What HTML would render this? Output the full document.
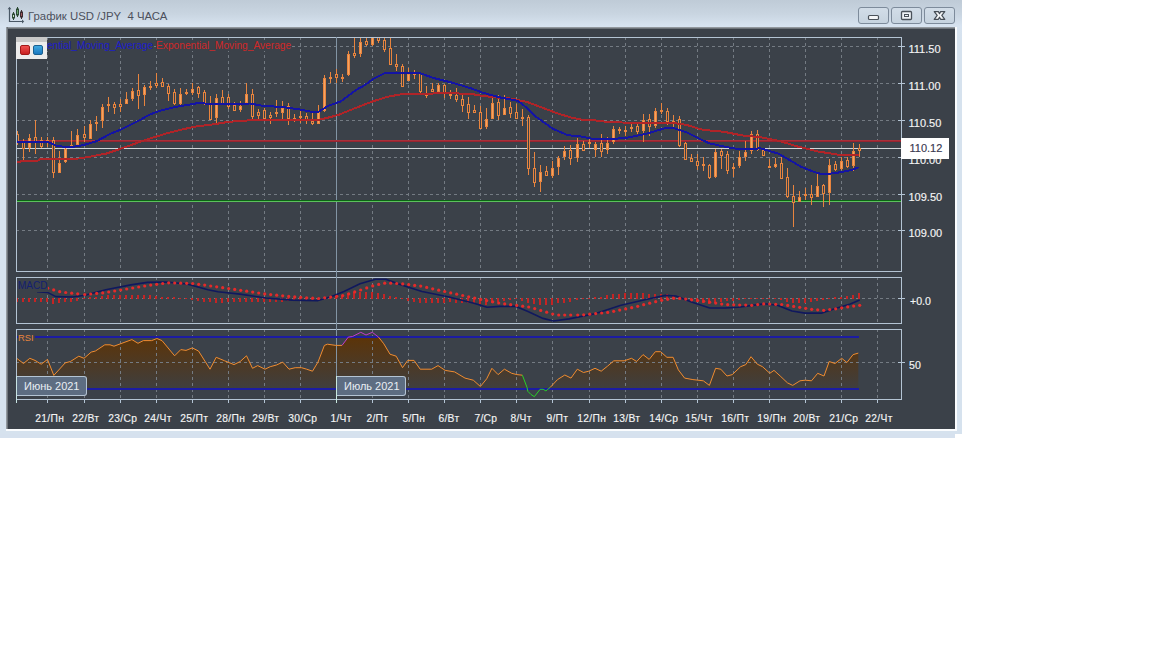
<!DOCTYPE html>
<html><head><meta charset="utf-8">
<style>
html,body{margin:0;padding:0;}
body{width:1152px;height:648px;overflow:hidden;background:#fff;position:relative;font-family:"Liberation Sans",sans-serif;}
.abs{position:absolute;}
#win{left:0;top:0;width:962px;height:434px;background:linear-gradient(#bfcbd7 0px,#c9d5e1 14px,#d7e3f0 26px,#d6e2ee 40px,#d6e2ee 434px);}
#strip{left:0;top:434px;width:955px;height:4px;background:#d6e1ee;}
#dark{left:8px;top:29px;width:947px;height:400px;background:#3b4149;}
#shadowT{left:6px;top:27px;width:949px;height:2px;background:linear-gradient(#a4aab0,#5c6268);}
#shadowL{left:6px;top:27px;width:2px;height:402px;background:linear-gradient(90deg,#a4aab0,#5c6268);}
#whiteR{left:955px;top:27px;width:2px;height:404px;background:#fafcfe;}
#whiteB{left:6px;top:429px;width:951px;height:2px;background:#fafcfe;}
.title{left:28px;top:9px;font-size:11.6px;color:#4c505c;white-space:nowrap;transform:scaleX(0.98);transform-origin:0 0;}
.btn{top:7px;width:29px;height:15px;border:1px solid #7d8b9b;border-radius:3px;background:linear-gradient(#d2dde8,#c6d3df);}
svg{position:absolute;left:0;top:0;}
.lbl{font-size:11px;color:#f4f4f4;white-space:nowrap;-webkit-text-stroke:0.15px currentColor;}
.date{font-size:10.3px;letter-spacing:0.3px;color:#f4f4f4;white-space:nowrap;top:413px;-webkit-text-stroke:0.15px currentColor;}
.month{height:18px;background:#5d6d82;border:1px solid #b4c4d4;border-left:none;border-radius:0 3px 3px 0;color:#e8eef4;font-size:11px;white-space:nowrap;}
.leg{font-size:10.2px;white-space:nowrap;top:40px;background:#3b4149;}
</style></head><body>
<div id="win" class="abs"></div>
<div id="strip" class="abs"></div>
<div id="shadowT" class="abs"></div>
<div id="shadowL" class="abs"></div>
<div id="dark" class="abs"></div>
<div id="whiteR" class="abs"></div>
<div id="whiteB" class="abs"></div>
<svg width="30" height="30" style="left:0;top:0">
<path d="M9.5 8 V21.5 H23" fill="none" stroke="#4a5866" stroke-width="1.2"/>
<path d="M7.6 9.2 L9.5 6.8 L11.4 9.2 Z" fill="#4a5866"/>
<path d="M22 19.6 L24.2 21.5 L22 23.4 Z" fill="#4a5866"/>
<line x1="13.5" y1="12" x2="13.5" y2="20" stroke="#2c4a34"/>
<rect x="12.5" y="14" width="2" height="4" fill="#c8e0c8" stroke="#2c4a34" stroke-width="1"/>
<line x1="17.5" y1="7" x2="17.5" y2="17" stroke="#2c4a34"/>
<rect x="16.5" y="9" width="2" height="6" fill="#68a870" stroke="#2c4a34" stroke-width="1"/>
<line x1="21.5" y1="10" x2="21.5" y2="19" stroke="#3a2c30"/>
<rect x="20.5" y="12" width="2" height="5" fill="#a05860" stroke="#3a2c30" stroke-width="1"/>
</svg>
<div class="abs title">График USD /JPY&nbsp; 4 ЧАСА</div>
<div class="abs btn" style="left:858px"></div>
<div class="abs btn" style="left:891px"></div>
<div class="abs btn" style="left:924px"></div>
<svg width="1152" height="648" style="left:0;top:0">
<rect x="868.5" y="15.5" width="10" height="4" rx="1" fill="#f4f6f8" stroke="#4a525a" stroke-width="1.2"/>
<rect x="901.5" y="11.5" width="10" height="8" rx="1" fill="#eef2f6" stroke="#4a525a" stroke-width="1.3"/>
<rect x="904.5" y="14.5" width="4" height="2" fill="none" stroke="#4a525a" stroke-width="1"/>
<path d="M934.2 11.6 L938.4 11.6 L939.5 13.7 L940.6 11.6 L944.8 11.6 L941.8 15.45 L944.8 19.3 L940.6 19.3 L939.5 17.2 L938.4 19.3 L934.2 19.3 L937.2 15.45 Z" fill="#f6f8fa" stroke="#454d56" stroke-width="1.2" stroke-linejoin="round"/>
</svg>
<svg width="1152" height="648" style="left:0;top:0" shape-rendering="crispEdges">
<defs>
<clipPath id="clipMain"><rect x="17" y="38" width="884" height="233"/></clipPath>
<clipPath id="clipMacd"><rect x="17" y="278" width="884" height="45"/></clipPath>
<clipPath id="clipRsi"><rect x="17" y="330" width="884" height="69"/></clipPath>
<linearGradient id="rsiGrad" x1="0" y1="337" x2="0" y2="392" gradientUnits="userSpaceOnUse">
<stop offset="0" stop-color="#5c3408"/><stop offset="1" stop-color="#3d3f42"/>
</linearGradient>
</defs>
<rect x="16" y="37" width="885" height="234" fill="none" stroke="#b4c4d4" stroke-width="1" transform="translate(0.5 0.5)"/>
<rect x="16" y="277" width="885" height="46" fill="none" stroke="#b4c4d4" stroke-width="1" transform="translate(0.5 0.5)"/>
<rect x="16" y="329" width="885" height="70" fill="none" stroke="#b4c4d4" stroke-width="1" transform="translate(0.5 0.5)"/>
<g clip-path="url(#clipRsi)">
<polygon points="16.7,389.0 16.7,358.3 23.5,363.5 29.8,358.3 35.0,360.4 41.2,364.2 47.5,359.4 53.8,375.4 65.2,362.9 70.4,361.5 78.8,356.2 84.0,358.3 91.2,352.1 95.4,351.0 104.8,344.8 110.0,344.8 114.0,346.2 120.4,343.8 131.9,339.6 138.0,343.3 143.3,340.6 151.7,340.6 156.9,338.5 162.0,340.6 174.6,355.8 180.8,349.6 186.0,350.4 192.3,347.9 198.5,351.0 210.0,369.2 216.2,357.3 224.6,360.8 234.0,364.6 240.2,361.5 246.5,355.8 252.5,368.3 257.7,365.6 265.0,369.2 270.2,366.7 276.5,365.0 282.7,362.1 289.0,369.2 295.2,367.7 301.5,367.7 306.7,369.2 312.5,371.2 318.0,362.1 324.4,345.4 327.5,344.2 335.8,345.4 342.0,345.4 348.3,337.1 352.5,337.0 360.8,337.0 366.0,337.0 372.3,337.0 378.5,337.1 383.8,343.8 390.0,354.2 396.2,356.2 402.5,367.7 407.7,360.4 414.0,360.4 420.2,369.2 431.7,369.2 438.0,365.6 445.2,370.4 454.6,371.9 465.0,378.1 473.3,380.2 480.4,386.5 486.7,378.8 491.9,368.3 498.1,374.6 504.4,369.2 511.7,373.3 516.9,374.6 522.4,375.2 527.0,387.4 527.8,389.0 530.9,389.0 534.3,389.0 540.1,389.0 543.2,389.0 545.9,389.0 547.8,389.0 550.2,387.4 557.5,379.6 564.8,375.0 571.0,378.1 577.3,369.2 583.5,372.5 588.8,371.2 595.0,368.3 601.2,371.2 607.5,366.2 613.8,360.8 624.2,360.8 631.5,358.3 636.7,361.5 643.0,354.6 649.2,359.4 655.4,351.7 660.6,351.7 666.9,357.3 673.1,357.3 678.3,369.8 684.6,378.1 692.9,379.6 703.3,380.8 709.4,385.4 715.6,368.3 720.8,369.2 727.0,376.0 732.3,374.6 740.6,366.7 745.8,364.6 751.0,356.7 757.3,364.2 762.5,366.7 769.8,373.3 774.0,370.4 780.2,376.0 787.5,382.9 792.7,385.4 800.0,380.8 805.2,380.2 811.5,380.8 817.7,373.3 824.0,376.0 829.2,361.5 835.0,363.5 841.7,358.3 846.9,362.5 853.1,354.6 858.3,353.1 858.3,389.0" fill="url(#rsiGrad)" shape-rendering="geometricPrecision"/>
</g>
<line x1="47.5" y1="38" x2="47.5" y2="271" stroke="#747b83" stroke-width="1" stroke-dasharray="3 3" stroke-dashoffset="1"/>
<line x1="47.5" y1="278" x2="47.5" y2="323" stroke="#747b83" stroke-width="1" stroke-dasharray="3 3" stroke-dashoffset="1"/>
<line x1="47.5" y1="330" x2="47.5" y2="399" stroke="#747b83" stroke-width="1" stroke-dasharray="3 3" stroke-dashoffset="1"/>
<rect x="47" y="399" width="1" height="4" fill="#b4c4d4"/>
<line x1="84.5" y1="38" x2="84.5" y2="271" stroke="#747b83" stroke-width="1" stroke-dasharray="3 3" stroke-dashoffset="1"/>
<line x1="84.5" y1="278" x2="84.5" y2="323" stroke="#747b83" stroke-width="1" stroke-dasharray="3 3" stroke-dashoffset="1"/>
<line x1="84.5" y1="330" x2="84.5" y2="399" stroke="#747b83" stroke-width="1" stroke-dasharray="3 3" stroke-dashoffset="1"/>
<rect x="84" y="399" width="1" height="4" fill="#b4c4d4"/>
<line x1="120.5" y1="38" x2="120.5" y2="271" stroke="#747b83" stroke-width="1" stroke-dasharray="3 3" stroke-dashoffset="1"/>
<line x1="120.5" y1="278" x2="120.5" y2="323" stroke="#747b83" stroke-width="1" stroke-dasharray="3 3" stroke-dashoffset="1"/>
<line x1="120.5" y1="330" x2="120.5" y2="399" stroke="#747b83" stroke-width="1" stroke-dasharray="3 3" stroke-dashoffset="1"/>
<rect x="120" y="399" width="1" height="4" fill="#b4c4d4"/>
<line x1="156.5" y1="38" x2="156.5" y2="271" stroke="#747b83" stroke-width="1" stroke-dasharray="3 3" stroke-dashoffset="1"/>
<line x1="156.5" y1="278" x2="156.5" y2="323" stroke="#747b83" stroke-width="1" stroke-dasharray="3 3" stroke-dashoffset="1"/>
<line x1="156.5" y1="330" x2="156.5" y2="399" stroke="#747b83" stroke-width="1" stroke-dasharray="3 3" stroke-dashoffset="1"/>
<rect x="156" y="399" width="1" height="4" fill="#b4c4d4"/>
<line x1="192.5" y1="38" x2="192.5" y2="271" stroke="#747b83" stroke-width="1" stroke-dasharray="3 3" stroke-dashoffset="1"/>
<line x1="192.5" y1="278" x2="192.5" y2="323" stroke="#747b83" stroke-width="1" stroke-dasharray="3 3" stroke-dashoffset="1"/>
<line x1="192.5" y1="330" x2="192.5" y2="399" stroke="#747b83" stroke-width="1" stroke-dasharray="3 3" stroke-dashoffset="1"/>
<rect x="192" y="399" width="1" height="4" fill="#b4c4d4"/>
<line x1="228.5" y1="38" x2="228.5" y2="271" stroke="#747b83" stroke-width="1" stroke-dasharray="3 3" stroke-dashoffset="1"/>
<line x1="228.5" y1="278" x2="228.5" y2="323" stroke="#747b83" stroke-width="1" stroke-dasharray="3 3" stroke-dashoffset="1"/>
<line x1="228.5" y1="330" x2="228.5" y2="399" stroke="#747b83" stroke-width="1" stroke-dasharray="3 3" stroke-dashoffset="1"/>
<rect x="228" y="399" width="1" height="4" fill="#b4c4d4"/>
<line x1="264.5" y1="38" x2="264.5" y2="271" stroke="#747b83" stroke-width="1" stroke-dasharray="3 3" stroke-dashoffset="1"/>
<line x1="264.5" y1="278" x2="264.5" y2="323" stroke="#747b83" stroke-width="1" stroke-dasharray="3 3" stroke-dashoffset="1"/>
<line x1="264.5" y1="330" x2="264.5" y2="399" stroke="#747b83" stroke-width="1" stroke-dasharray="3 3" stroke-dashoffset="1"/>
<rect x="264" y="399" width="1" height="4" fill="#b4c4d4"/>
<line x1="300.5" y1="38" x2="300.5" y2="271" stroke="#747b83" stroke-width="1" stroke-dasharray="3 3" stroke-dashoffset="1"/>
<line x1="300.5" y1="278" x2="300.5" y2="323" stroke="#747b83" stroke-width="1" stroke-dasharray="3 3" stroke-dashoffset="1"/>
<line x1="300.5" y1="330" x2="300.5" y2="399" stroke="#747b83" stroke-width="1" stroke-dasharray="3 3" stroke-dashoffset="1"/>
<rect x="300" y="399" width="1" height="4" fill="#b4c4d4"/>
<line x1="372.5" y1="38" x2="372.5" y2="271" stroke="#747b83" stroke-width="1" stroke-dasharray="3 3" stroke-dashoffset="1"/>
<line x1="372.5" y1="278" x2="372.5" y2="323" stroke="#747b83" stroke-width="1" stroke-dasharray="3 3" stroke-dashoffset="1"/>
<line x1="372.5" y1="330" x2="372.5" y2="399" stroke="#747b83" stroke-width="1" stroke-dasharray="3 3" stroke-dashoffset="1"/>
<rect x="372" y="399" width="1" height="4" fill="#b4c4d4"/>
<line x1="408.5" y1="38" x2="408.5" y2="271" stroke="#747b83" stroke-width="1" stroke-dasharray="3 3" stroke-dashoffset="1"/>
<line x1="408.5" y1="278" x2="408.5" y2="323" stroke="#747b83" stroke-width="1" stroke-dasharray="3 3" stroke-dashoffset="1"/>
<line x1="408.5" y1="330" x2="408.5" y2="399" stroke="#747b83" stroke-width="1" stroke-dasharray="3 3" stroke-dashoffset="1"/>
<rect x="408" y="399" width="1" height="4" fill="#b4c4d4"/>
<line x1="444.5" y1="38" x2="444.5" y2="271" stroke="#747b83" stroke-width="1" stroke-dasharray="3 3" stroke-dashoffset="1"/>
<line x1="444.5" y1="278" x2="444.5" y2="323" stroke="#747b83" stroke-width="1" stroke-dasharray="3 3" stroke-dashoffset="1"/>
<line x1="444.5" y1="330" x2="444.5" y2="399" stroke="#747b83" stroke-width="1" stroke-dasharray="3 3" stroke-dashoffset="1"/>
<rect x="444" y="399" width="1" height="4" fill="#b4c4d4"/>
<line x1="480.5" y1="38" x2="480.5" y2="271" stroke="#747b83" stroke-width="1" stroke-dasharray="3 3" stroke-dashoffset="1"/>
<line x1="480.5" y1="278" x2="480.5" y2="323" stroke="#747b83" stroke-width="1" stroke-dasharray="3 3" stroke-dashoffset="1"/>
<line x1="480.5" y1="330" x2="480.5" y2="399" stroke="#747b83" stroke-width="1" stroke-dasharray="3 3" stroke-dashoffset="1"/>
<rect x="480" y="399" width="1" height="4" fill="#b4c4d4"/>
<line x1="516.5" y1="38" x2="516.5" y2="271" stroke="#747b83" stroke-width="1" stroke-dasharray="3 3" stroke-dashoffset="1"/>
<line x1="516.5" y1="278" x2="516.5" y2="323" stroke="#747b83" stroke-width="1" stroke-dasharray="3 3" stroke-dashoffset="1"/>
<line x1="516.5" y1="330" x2="516.5" y2="399" stroke="#747b83" stroke-width="1" stroke-dasharray="3 3" stroke-dashoffset="1"/>
<rect x="516" y="399" width="1" height="4" fill="#b4c4d4"/>
<line x1="552.5" y1="38" x2="552.5" y2="271" stroke="#747b83" stroke-width="1" stroke-dasharray="3 3" stroke-dashoffset="1"/>
<line x1="552.5" y1="278" x2="552.5" y2="323" stroke="#747b83" stroke-width="1" stroke-dasharray="3 3" stroke-dashoffset="1"/>
<line x1="552.5" y1="330" x2="552.5" y2="399" stroke="#747b83" stroke-width="1" stroke-dasharray="3 3" stroke-dashoffset="1"/>
<rect x="552" y="399" width="1" height="4" fill="#b4c4d4"/>
<line x1="589.5" y1="38" x2="589.5" y2="271" stroke="#747b83" stroke-width="1" stroke-dasharray="3 3" stroke-dashoffset="1"/>
<line x1="589.5" y1="278" x2="589.5" y2="323" stroke="#747b83" stroke-width="1" stroke-dasharray="3 3" stroke-dashoffset="1"/>
<line x1="589.5" y1="330" x2="589.5" y2="399" stroke="#747b83" stroke-width="1" stroke-dasharray="3 3" stroke-dashoffset="1"/>
<rect x="589" y="399" width="1" height="4" fill="#b4c4d4"/>
<line x1="625.5" y1="38" x2="625.5" y2="271" stroke="#747b83" stroke-width="1" stroke-dasharray="3 3" stroke-dashoffset="1"/>
<line x1="625.5" y1="278" x2="625.5" y2="323" stroke="#747b83" stroke-width="1" stroke-dasharray="3 3" stroke-dashoffset="1"/>
<line x1="625.5" y1="330" x2="625.5" y2="399" stroke="#747b83" stroke-width="1" stroke-dasharray="3 3" stroke-dashoffset="1"/>
<rect x="625" y="399" width="1" height="4" fill="#b4c4d4"/>
<line x1="661.5" y1="38" x2="661.5" y2="271" stroke="#747b83" stroke-width="1" stroke-dasharray="3 3" stroke-dashoffset="1"/>
<line x1="661.5" y1="278" x2="661.5" y2="323" stroke="#747b83" stroke-width="1" stroke-dasharray="3 3" stroke-dashoffset="1"/>
<line x1="661.5" y1="330" x2="661.5" y2="399" stroke="#747b83" stroke-width="1" stroke-dasharray="3 3" stroke-dashoffset="1"/>
<rect x="661" y="399" width="1" height="4" fill="#b4c4d4"/>
<line x1="697.5" y1="38" x2="697.5" y2="271" stroke="#747b83" stroke-width="1" stroke-dasharray="3 3" stroke-dashoffset="1"/>
<line x1="697.5" y1="278" x2="697.5" y2="323" stroke="#747b83" stroke-width="1" stroke-dasharray="3 3" stroke-dashoffset="1"/>
<line x1="697.5" y1="330" x2="697.5" y2="399" stroke="#747b83" stroke-width="1" stroke-dasharray="3 3" stroke-dashoffset="1"/>
<rect x="697" y="399" width="1" height="4" fill="#b4c4d4"/>
<line x1="733.5" y1="38" x2="733.5" y2="271" stroke="#747b83" stroke-width="1" stroke-dasharray="3 3" stroke-dashoffset="1"/>
<line x1="733.5" y1="278" x2="733.5" y2="323" stroke="#747b83" stroke-width="1" stroke-dasharray="3 3" stroke-dashoffset="1"/>
<line x1="733.5" y1="330" x2="733.5" y2="399" stroke="#747b83" stroke-width="1" stroke-dasharray="3 3" stroke-dashoffset="1"/>
<rect x="733" y="399" width="1" height="4" fill="#b4c4d4"/>
<line x1="769.5" y1="38" x2="769.5" y2="271" stroke="#747b83" stroke-width="1" stroke-dasharray="3 3" stroke-dashoffset="1"/>
<line x1="769.5" y1="278" x2="769.5" y2="323" stroke="#747b83" stroke-width="1" stroke-dasharray="3 3" stroke-dashoffset="1"/>
<line x1="769.5" y1="330" x2="769.5" y2="399" stroke="#747b83" stroke-width="1" stroke-dasharray="3 3" stroke-dashoffset="1"/>
<rect x="769" y="399" width="1" height="4" fill="#b4c4d4"/>
<line x1="805.5" y1="38" x2="805.5" y2="271" stroke="#747b83" stroke-width="1" stroke-dasharray="3 3" stroke-dashoffset="1"/>
<line x1="805.5" y1="278" x2="805.5" y2="323" stroke="#747b83" stroke-width="1" stroke-dasharray="3 3" stroke-dashoffset="1"/>
<line x1="805.5" y1="330" x2="805.5" y2="399" stroke="#747b83" stroke-width="1" stroke-dasharray="3 3" stroke-dashoffset="1"/>
<rect x="805" y="399" width="1" height="4" fill="#b4c4d4"/>
<line x1="841.5" y1="38" x2="841.5" y2="271" stroke="#747b83" stroke-width="1" stroke-dasharray="3 3" stroke-dashoffset="1"/>
<line x1="841.5" y1="278" x2="841.5" y2="323" stroke="#747b83" stroke-width="1" stroke-dasharray="3 3" stroke-dashoffset="1"/>
<line x1="841.5" y1="330" x2="841.5" y2="399" stroke="#747b83" stroke-width="1" stroke-dasharray="3 3" stroke-dashoffset="1"/>
<rect x="841" y="399" width="1" height="4" fill="#b4c4d4"/>
<line x1="877.5" y1="38" x2="877.5" y2="271" stroke="#747b83" stroke-width="1" stroke-dasharray="3 3" stroke-dashoffset="1"/>
<line x1="877.5" y1="278" x2="877.5" y2="323" stroke="#747b83" stroke-width="1" stroke-dasharray="3 3" stroke-dashoffset="1"/>
<line x1="877.5" y1="330" x2="877.5" y2="399" stroke="#747b83" stroke-width="1" stroke-dasharray="3 3" stroke-dashoffset="1"/>
<rect x="877" y="399" width="1" height="4" fill="#b4c4d4"/>
<line x1="17" y1="46.5" x2="901" y2="46.5" stroke="#747b83" stroke-width="1" stroke-dasharray="3 3" stroke-dashoffset="1"/>
<rect x="898" y="46" width="7" height="1" fill="#b4c4d4"/>
<line x1="17" y1="83.5" x2="901" y2="83.5" stroke="#747b83" stroke-width="1" stroke-dasharray="3 3" stroke-dashoffset="1"/>
<rect x="898" y="83" width="7" height="1" fill="#b4c4d4"/>
<line x1="17" y1="120.5" x2="901" y2="120.5" stroke="#747b83" stroke-width="1" stroke-dasharray="3 3" stroke-dashoffset="1"/>
<rect x="898" y="120" width="7" height="1" fill="#b4c4d4"/>
<line x1="17" y1="157.5" x2="901" y2="157.5" stroke="#747b83" stroke-width="1" stroke-dasharray="3 3" stroke-dashoffset="1"/>
<rect x="898" y="157" width="7" height="1" fill="#b4c4d4"/>
<line x1="17" y1="194.5" x2="901" y2="194.5" stroke="#747b83" stroke-width="1" stroke-dasharray="3 3" stroke-dashoffset="1"/>
<rect x="898" y="194" width="7" height="1" fill="#b4c4d4"/>
<line x1="17" y1="230.5" x2="901" y2="230.5" stroke="#747b83" stroke-width="1" stroke-dasharray="3 3" stroke-dashoffset="1"/>
<rect x="898" y="230" width="7" height="1" fill="#b4c4d4"/>
<line x1="17" y1="298.5" x2="901" y2="298.5" stroke="#747b83" stroke-width="1" stroke-dasharray="3 3" stroke-dashoffset="1"/>
<rect x="898" y="298" width="7" height="1" fill="#b4c4d4"/>
<line x1="17" y1="362.5" x2="901" y2="362.5" stroke="#747b83" stroke-width="1" stroke-dasharray="3 3" stroke-dashoffset="1"/>
<rect x="898" y="362" width="7" height="1" fill="#b4c4d4"/>
<rect x="336" y="37" width="1" height="339" fill="#8294a4"/>
<g clip-path="url(#clipMain)">
<rect x="17" y="140" width="884" height="1" fill="#a8303a"/>
<rect x="17" y="141" width="884" height="1" fill="#962430"/>
<rect x="17" y="148" width="884" height="1" fill="#d2d5d9"/>
<rect x="17" y="200" width="884" height="1" fill="#0c6414"/>
<rect x="17" y="201" width="884" height="1" fill="#5cc05c"/>
<rect x="17" y="131" width="1" height="14" fill="#e8843e"/>
<rect x="16" y="134" width="3" height="9" fill="#e8843e"/>
<rect x="17" y="135" width="1" height="7" fill="#3b4149"/>
<rect x="23" y="139" width="1" height="22" fill="#e8843e"/>
<rect x="22" y="141" width="3" height="8" fill="#e8843e"/>
<rect x="23" y="142" width="1" height="6" fill="#3b4149"/>
<rect x="29" y="134" width="1" height="18" fill="#e8843e"/>
<rect x="28" y="138" width="3" height="10" fill="#e8843e"/>
<rect x="29" y="139" width="1" height="8" fill="#f4a462"/>
<rect x="35" y="120" width="1" height="34" fill="#e8843e"/>
<rect x="34" y="137" width="3" height="6" fill="#e8843e"/>
<rect x="35" y="138" width="1" height="4" fill="#3b4149"/>
<rect x="41" y="137" width="1" height="11" fill="#e8843e"/>
<rect x="40" y="140" width="3" height="7" fill="#e8843e"/>
<rect x="41" y="141" width="1" height="5" fill="#3b4149"/>
<rect x="47" y="137" width="1" height="10" fill="#e8843e"/>
<rect x="46" y="140" width="3" height="2" fill="#e8843e"/>
<rect x="53" y="137" width="1" height="41" fill="#e8843e"/>
<rect x="52" y="140" width="3" height="33" fill="#e8843e"/>
<rect x="53" y="141" width="1" height="31" fill="#3b4149"/>
<rect x="59" y="151" width="1" height="21" fill="#e8843e"/>
<rect x="58" y="163" width="3" height="10" fill="#e8843e"/>
<rect x="59" y="164" width="1" height="8" fill="#f4a462"/>
<rect x="65" y="147" width="1" height="16" fill="#e8843e"/>
<rect x="64" y="149" width="3" height="13" fill="#e8843e"/>
<rect x="65" y="150" width="1" height="11" fill="#f4a462"/>
<rect x="71" y="131" width="1" height="16" fill="#e8843e"/>
<rect x="70" y="145" width="3" height="2" fill="#e8843e"/>
<rect x="77" y="129" width="1" height="16" fill="#e8843e"/>
<rect x="76" y="135" width="3" height="10" fill="#e8843e"/>
<rect x="77" y="136" width="1" height="8" fill="#f4a462"/>
<rect x="84" y="126" width="1" height="16" fill="#e8843e"/>
<rect x="83" y="134" width="3" height="4" fill="#e8843e"/>
<rect x="84" y="135" width="1" height="2" fill="#3b4149"/>
<rect x="90" y="120" width="1" height="19" fill="#e8843e"/>
<rect x="89" y="124" width="3" height="15" fill="#e8843e"/>
<rect x="90" y="125" width="1" height="13" fill="#f4a462"/>
<rect x="96" y="116" width="1" height="15" fill="#e8843e"/>
<rect x="95" y="122" width="3" height="2" fill="#e8843e"/>
<rect x="102" y="104" width="1" height="24" fill="#e8843e"/>
<rect x="101" y="107" width="3" height="14" fill="#e8843e"/>
<rect x="102" y="108" width="1" height="12" fill="#f4a462"/>
<rect x="108" y="97" width="1" height="15" fill="#e8843e"/>
<rect x="107" y="104" width="3" height="2" fill="#e8843e"/>
<rect x="114" y="102" width="1" height="12" fill="#e8843e"/>
<rect x="113" y="104" width="3" height="4" fill="#e8843e"/>
<rect x="114" y="105" width="1" height="2" fill="#3b4149"/>
<rect x="120" y="99" width="1" height="13" fill="#e8843e"/>
<rect x="119" y="104" width="3" height="3" fill="#e8843e"/>
<rect x="120" y="105" width="1" height="1" fill="#3b4149"/>
<rect x="126" y="92" width="1" height="12" fill="#e8843e"/>
<rect x="125" y="99" width="3" height="5" fill="#e8843e"/>
<rect x="126" y="100" width="1" height="3" fill="#f4a462"/>
<rect x="132" y="88" width="1" height="13" fill="#e8843e"/>
<rect x="131" y="91" width="3" height="8" fill="#e8843e"/>
<rect x="132" y="92" width="1" height="6" fill="#f4a462"/>
<rect x="138" y="74" width="1" height="35" fill="#e8843e"/>
<rect x="137" y="90" width="3" height="6" fill="#e8843e"/>
<rect x="138" y="91" width="1" height="4" fill="#3b4149"/>
<rect x="144" y="85" width="1" height="21" fill="#e8843e"/>
<rect x="143" y="87" width="3" height="8" fill="#e8843e"/>
<rect x="144" y="88" width="1" height="6" fill="#f4a462"/>
<rect x="150" y="81" width="1" height="9" fill="#e8843e"/>
<rect x="149" y="86" width="3" height="2" fill="#e8843e"/>
<rect x="156" y="73" width="1" height="15" fill="#e8843e"/>
<rect x="155" y="83" width="3" height="3" fill="#e8843e"/>
<rect x="156" y="84" width="1" height="1" fill="#3b4149"/>
<rect x="162" y="78" width="1" height="9" fill="#e8843e"/>
<rect x="161" y="82" width="3" height="5" fill="#e8843e"/>
<rect x="162" y="83" width="1" height="3" fill="#3b4149"/>
<rect x="168" y="84" width="1" height="17" fill="#e8843e"/>
<rect x="167" y="86" width="3" height="8" fill="#e8843e"/>
<rect x="168" y="87" width="1" height="6" fill="#3b4149"/>
<rect x="174" y="89" width="1" height="16" fill="#e8843e"/>
<rect x="173" y="92" width="3" height="12" fill="#e8843e"/>
<rect x="174" y="93" width="1" height="10" fill="#3b4149"/>
<rect x="180" y="88" width="1" height="18" fill="#e8843e"/>
<rect x="179" y="94" width="3" height="10" fill="#e8843e"/>
<rect x="180" y="95" width="1" height="8" fill="#f4a462"/>
<rect x="186" y="89" width="1" height="6" fill="#e8843e"/>
<rect x="185" y="92" width="3" height="2" fill="#e8843e"/>
<rect x="192" y="83" width="1" height="12" fill="#e8843e"/>
<rect x="191" y="89" width="3" height="4" fill="#e8843e"/>
<rect x="192" y="90" width="1" height="2" fill="#f4a462"/>
<rect x="198" y="86" width="1" height="12" fill="#e8843e"/>
<rect x="197" y="87" width="3" height="7" fill="#e8843e"/>
<rect x="198" y="88" width="1" height="5" fill="#3b4149"/>
<rect x="204" y="90" width="1" height="15" fill="#e8843e"/>
<rect x="203" y="92" width="3" height="12" fill="#e8843e"/>
<rect x="204" y="93" width="1" height="10" fill="#3b4149"/>
<rect x="210" y="96" width="1" height="24" fill="#e8843e"/>
<rect x="209" y="104" width="3" height="16" fill="#e8843e"/>
<rect x="210" y="105" width="1" height="14" fill="#3b4149"/>
<rect x="216" y="94" width="1" height="29" fill="#e8843e"/>
<rect x="215" y="98" width="3" height="20" fill="#e8843e"/>
<rect x="216" y="99" width="1" height="18" fill="#f4a462"/>
<rect x="222" y="90" width="1" height="14" fill="#e8843e"/>
<rect x="221" y="97" width="3" height="7" fill="#e8843e"/>
<rect x="222" y="98" width="1" height="5" fill="#3b4149"/>
<rect x="228" y="94" width="1" height="15" fill="#e8843e"/>
<rect x="227" y="97" width="3" height="10" fill="#e8843e"/>
<rect x="228" y="98" width="1" height="8" fill="#3b4149"/>
<rect x="234" y="102" width="1" height="9" fill="#e8843e"/>
<rect x="233" y="105" width="3" height="6" fill="#e8843e"/>
<rect x="234" y="106" width="1" height="4" fill="#3b4149"/>
<rect x="240" y="101" width="1" height="11" fill="#e8843e"/>
<rect x="239" y="106" width="3" height="4" fill="#e8843e"/>
<rect x="240" y="107" width="1" height="2" fill="#f4a462"/>
<rect x="246" y="83" width="1" height="22" fill="#e8843e"/>
<rect x="245" y="94" width="3" height="9" fill="#e8843e"/>
<rect x="246" y="95" width="1" height="7" fill="#f4a462"/>
<rect x="252" y="89" width="1" height="31" fill="#e8843e"/>
<rect x="251" y="94" width="3" height="23" fill="#e8843e"/>
<rect x="252" y="95" width="1" height="21" fill="#3b4149"/>
<rect x="258" y="109" width="1" height="10" fill="#e8843e"/>
<rect x="257" y="112" width="3" height="4" fill="#e8843e"/>
<rect x="258" y="113" width="1" height="2" fill="#3b4149"/>
<rect x="264" y="108" width="1" height="12" fill="#e8843e"/>
<rect x="263" y="110" width="3" height="9" fill="#e8843e"/>
<rect x="264" y="111" width="1" height="7" fill="#3b4149"/>
<rect x="270" y="112" width="1" height="12" fill="#e8843e"/>
<rect x="269" y="115" width="3" height="3" fill="#e8843e"/>
<rect x="270" y="116" width="1" height="1" fill="#3b4149"/>
<rect x="276" y="100" width="1" height="17" fill="#e8843e"/>
<rect x="275" y="112" width="3" height="2" fill="#e8843e"/>
<rect x="282" y="101" width="1" height="18" fill="#e8843e"/>
<rect x="281" y="108" width="3" height="5" fill="#e8843e"/>
<rect x="282" y="109" width="1" height="3" fill="#f4a462"/>
<rect x="288" y="103" width="1" height="22" fill="#e8843e"/>
<rect x="287" y="106" width="3" height="13" fill="#e8843e"/>
<rect x="288" y="107" width="1" height="11" fill="#3b4149"/>
<rect x="294" y="114" width="1" height="8" fill="#e8843e"/>
<rect x="293" y="118" width="3" height="2" fill="#e8843e"/>
<rect x="300" y="110" width="1" height="13" fill="#e8843e"/>
<rect x="299" y="116" width="3" height="2" fill="#e8843e"/>
<rect x="306" y="113" width="1" height="11" fill="#e8843e"/>
<rect x="305" y="116" width="3" height="4" fill="#e8843e"/>
<rect x="306" y="117" width="1" height="2" fill="#3b4149"/>
<rect x="312" y="113" width="1" height="12" fill="#e8843e"/>
<rect x="311" y="121" width="3" height="3" fill="#e8843e"/>
<rect x="312" y="122" width="1" height="1" fill="#3b4149"/>
<rect x="318" y="105" width="1" height="19" fill="#e8843e"/>
<rect x="317" y="112" width="3" height="12" fill="#e8843e"/>
<rect x="318" y="113" width="1" height="10" fill="#f4a462"/>
<rect x="324" y="75" width="1" height="37" fill="#e8843e"/>
<rect x="323" y="78" width="3" height="33" fill="#e8843e"/>
<rect x="324" y="79" width="1" height="31" fill="#f4a462"/>
<rect x="330" y="72" width="1" height="11" fill="#e8843e"/>
<rect x="329" y="77" width="3" height="2" fill="#e8843e"/>
<rect x="336" y="69" width="1" height="14" fill="#e8843e"/>
<rect x="335" y="74" width="3" height="4" fill="#e8843e"/>
<rect x="336" y="75" width="1" height="2" fill="#3b4149"/>
<rect x="342" y="74" width="1" height="8" fill="#e8843e"/>
<rect x="341" y="77" width="3" height="2" fill="#e8843e"/>
<rect x="348" y="51" width="1" height="25" fill="#e8843e"/>
<rect x="347" y="54" width="3" height="21" fill="#e8843e"/>
<rect x="348" y="55" width="1" height="19" fill="#f4a462"/>
<rect x="354" y="37" width="1" height="21" fill="#e8843e"/>
<rect x="353" y="53" width="3" height="3" fill="#e8843e"/>
<rect x="354" y="54" width="1" height="1" fill="#3b4149"/>
<rect x="360" y="37" width="1" height="20" fill="#e8843e"/>
<rect x="359" y="42" width="3" height="12" fill="#e8843e"/>
<rect x="360" y="43" width="1" height="10" fill="#f4a462"/>
<rect x="366" y="37" width="1" height="9" fill="#e8843e"/>
<rect x="365" y="41" width="3" height="4" fill="#e8843e"/>
<rect x="366" y="42" width="1" height="2" fill="#3b4149"/>
<rect x="372" y="37" width="1" height="9" fill="#e8843e"/>
<rect x="371" y="37" width="3" height="8" fill="#e8843e"/>
<rect x="372" y="38" width="1" height="6" fill="#f4a462"/>
<rect x="378" y="37" width="1" height="6" fill="#e8843e"/>
<rect x="377" y="37" width="3" height="4" fill="#e8843e"/>
<rect x="378" y="38" width="1" height="2" fill="#3b4149"/>
<rect x="384" y="38" width="1" height="14" fill="#e8843e"/>
<rect x="383" y="40" width="3" height="10" fill="#e8843e"/>
<rect x="384" y="41" width="1" height="8" fill="#3b4149"/>
<rect x="390" y="37" width="1" height="28" fill="#e8843e"/>
<rect x="389" y="48" width="3" height="17" fill="#e8843e"/>
<rect x="390" y="49" width="1" height="15" fill="#3b4149"/>
<rect x="396" y="54" width="1" height="17" fill="#e8843e"/>
<rect x="395" y="64" width="3" height="3" fill="#e8843e"/>
<rect x="396" y="65" width="1" height="1" fill="#3b4149"/>
<rect x="402" y="64" width="1" height="22" fill="#e8843e"/>
<rect x="401" y="66" width="3" height="21" fill="#e8843e"/>
<rect x="402" y="67" width="1" height="19" fill="#3b4149"/>
<rect x="408" y="68" width="1" height="13" fill="#e8843e"/>
<rect x="407" y="74" width="3" height="7" fill="#e8843e"/>
<rect x="408" y="75" width="1" height="5" fill="#f4a462"/>
<rect x="414" y="70" width="1" height="9" fill="#e8843e"/>
<rect x="413" y="72" width="3" height="3" fill="#e8843e"/>
<rect x="414" y="73" width="1" height="1" fill="#3b4149"/>
<rect x="420" y="72" width="1" height="21" fill="#e8843e"/>
<rect x="419" y="73" width="3" height="19" fill="#e8843e"/>
<rect x="420" y="74" width="1" height="17" fill="#3b4149"/>
<rect x="426" y="86" width="1" height="12" fill="#e8843e"/>
<rect x="425" y="94" width="3" height="2" fill="#e8843e"/>
<rect x="432" y="83" width="1" height="9" fill="#e8843e"/>
<rect x="431" y="89" width="3" height="3" fill="#e8843e"/>
<rect x="432" y="90" width="1" height="1" fill="#3b4149"/>
<rect x="438" y="83" width="1" height="9" fill="#e8843e"/>
<rect x="437" y="85" width="3" height="7" fill="#e8843e"/>
<rect x="438" y="86" width="1" height="5" fill="#f4a462"/>
<rect x="444" y="84" width="1" height="14" fill="#e8843e"/>
<rect x="443" y="85" width="3" height="9" fill="#e8843e"/>
<rect x="444" y="86" width="1" height="7" fill="#3b4149"/>
<rect x="450" y="90" width="1" height="9" fill="#e8843e"/>
<rect x="449" y="94" width="3" height="2" fill="#e8843e"/>
<rect x="456" y="88" width="1" height="14" fill="#e8843e"/>
<rect x="455" y="95" width="3" height="5" fill="#e8843e"/>
<rect x="456" y="96" width="1" height="3" fill="#3b4149"/>
<rect x="462" y="94" width="1" height="18" fill="#e8843e"/>
<rect x="461" y="99" width="3" height="7" fill="#e8843e"/>
<rect x="462" y="100" width="1" height="5" fill="#3b4149"/>
<rect x="468" y="97" width="1" height="22" fill="#e8843e"/>
<rect x="467" y="104" width="3" height="9" fill="#e8843e"/>
<rect x="468" y="105" width="1" height="7" fill="#3b4149"/>
<rect x="474" y="105" width="1" height="8" fill="#e8843e"/>
<rect x="473" y="110" width="3" height="3" fill="#e8843e"/>
<rect x="474" y="111" width="1" height="1" fill="#3b4149"/>
<rect x="480" y="106" width="1" height="23" fill="#e8843e"/>
<rect x="479" y="112" width="3" height="17" fill="#e8843e"/>
<rect x="480" y="113" width="1" height="15" fill="#3b4149"/>
<rect x="486" y="108" width="1" height="21" fill="#e8843e"/>
<rect x="485" y="119" width="3" height="8" fill="#e8843e"/>
<rect x="486" y="120" width="1" height="6" fill="#f4a462"/>
<rect x="492" y="98" width="1" height="21" fill="#e8843e"/>
<rect x="491" y="103" width="3" height="16" fill="#e8843e"/>
<rect x="492" y="104" width="1" height="14" fill="#f4a462"/>
<rect x="498" y="95" width="1" height="25" fill="#e8843e"/>
<rect x="497" y="102" width="3" height="14" fill="#e8843e"/>
<rect x="498" y="103" width="1" height="12" fill="#3b4149"/>
<rect x="504" y="95" width="1" height="20" fill="#e8843e"/>
<rect x="503" y="108" width="3" height="7" fill="#e8843e"/>
<rect x="504" y="109" width="1" height="5" fill="#f4a462"/>
<rect x="510" y="102" width="1" height="16" fill="#e8843e"/>
<rect x="509" y="107" width="3" height="7" fill="#e8843e"/>
<rect x="510" y="108" width="1" height="5" fill="#3b4149"/>
<rect x="516" y="104" width="1" height="15" fill="#e8843e"/>
<rect x="515" y="112" width="3" height="7" fill="#e8843e"/>
<rect x="516" y="113" width="1" height="5" fill="#3b4149"/>
<rect x="522" y="109" width="1" height="17" fill="#e8843e"/>
<rect x="521" y="117" width="3" height="2" fill="#e8843e"/>
<rect x="528" y="115" width="1" height="60" fill="#e8843e"/>
<rect x="527" y="117" width="3" height="52" fill="#e8843e"/>
<rect x="528" y="118" width="1" height="50" fill="#3b4149"/>
<rect x="534" y="152" width="1" height="35" fill="#e8843e"/>
<rect x="533" y="168" width="3" height="15" fill="#e8843e"/>
<rect x="534" y="169" width="1" height="13" fill="#3b4149"/>
<rect x="540" y="165" width="1" height="27" fill="#e8843e"/>
<rect x="539" y="172" width="3" height="10" fill="#e8843e"/>
<rect x="540" y="173" width="1" height="8" fill="#f4a462"/>
<rect x="546" y="166" width="1" height="10" fill="#e8843e"/>
<rect x="545" y="171" width="3" height="5" fill="#e8843e"/>
<rect x="546" y="172" width="1" height="3" fill="#3b4149"/>
<rect x="552" y="161" width="1" height="17" fill="#e8843e"/>
<rect x="551" y="168" width="3" height="8" fill="#e8843e"/>
<rect x="552" y="169" width="1" height="6" fill="#f4a462"/>
<rect x="558" y="156" width="1" height="19" fill="#e8843e"/>
<rect x="557" y="158" width="3" height="9" fill="#e8843e"/>
<rect x="558" y="159" width="1" height="7" fill="#f4a462"/>
<rect x="564" y="146" width="1" height="14" fill="#e8843e"/>
<rect x="563" y="151" width="3" height="6" fill="#e8843e"/>
<rect x="564" y="152" width="1" height="4" fill="#f4a462"/>
<rect x="570" y="145" width="1" height="20" fill="#e8843e"/>
<rect x="569" y="150" width="3" height="9" fill="#e8843e"/>
<rect x="570" y="151" width="1" height="7" fill="#3b4149"/>
<rect x="577" y="138" width="1" height="24" fill="#e8843e"/>
<rect x="576" y="144" width="3" height="14" fill="#e8843e"/>
<rect x="577" y="145" width="1" height="12" fill="#f4a462"/>
<rect x="583" y="141" width="1" height="10" fill="#e8843e"/>
<rect x="582" y="144" width="3" height="7" fill="#e8843e"/>
<rect x="583" y="145" width="1" height="5" fill="#3b4149"/>
<rect x="589" y="138" width="1" height="10" fill="#e8843e"/>
<rect x="588" y="142" width="3" height="2" fill="#e8843e"/>
<rect x="595" y="142" width="1" height="15" fill="#e8843e"/>
<rect x="594" y="144" width="3" height="6" fill="#e8843e"/>
<rect x="595" y="145" width="1" height="4" fill="#f4a462"/>
<rect x="601" y="134" width="1" height="23" fill="#e8843e"/>
<rect x="600" y="143" width="3" height="9" fill="#e8843e"/>
<rect x="601" y="144" width="1" height="7" fill="#3b4149"/>
<rect x="607" y="137" width="1" height="17" fill="#e8843e"/>
<rect x="606" y="143" width="3" height="7" fill="#e8843e"/>
<rect x="607" y="144" width="1" height="5" fill="#f4a462"/>
<rect x="613" y="126" width="1" height="18" fill="#e8843e"/>
<rect x="612" y="129" width="3" height="13" fill="#e8843e"/>
<rect x="613" y="130" width="1" height="11" fill="#f4a462"/>
<rect x="619" y="127" width="1" height="7" fill="#e8843e"/>
<rect x="618" y="129" width="3" height="2" fill="#e8843e"/>
<rect x="625" y="126" width="1" height="10" fill="#e8843e"/>
<rect x="624" y="130" width="3" height="2" fill="#e8843e"/>
<rect x="631" y="124" width="1" height="8" fill="#e8843e"/>
<rect x="630" y="127" width="3" height="2" fill="#e8843e"/>
<rect x="637" y="123" width="1" height="11" fill="#e8843e"/>
<rect x="636" y="126" width="3" height="6" fill="#e8843e"/>
<rect x="637" y="127" width="1" height="4" fill="#3b4149"/>
<rect x="643" y="114" width="1" height="28" fill="#e8843e"/>
<rect x="642" y="120" width="3" height="11" fill="#e8843e"/>
<rect x="643" y="121" width="1" height="9" fill="#f4a462"/>
<rect x="649" y="114" width="1" height="22" fill="#e8843e"/>
<rect x="648" y="119" width="3" height="8" fill="#e8843e"/>
<rect x="649" y="120" width="1" height="6" fill="#3b4149"/>
<rect x="655" y="108" width="1" height="20" fill="#e8843e"/>
<rect x="654" y="111" width="3" height="15" fill="#e8843e"/>
<rect x="655" y="112" width="1" height="13" fill="#f4a462"/>
<rect x="661" y="103" width="1" height="11" fill="#e8843e"/>
<rect x="660" y="110" width="3" height="2" fill="#e8843e"/>
<rect x="667" y="108" width="1" height="17" fill="#e8843e"/>
<rect x="666" y="111" width="3" height="11" fill="#e8843e"/>
<rect x="667" y="112" width="1" height="9" fill="#3b4149"/>
<rect x="673" y="115" width="1" height="12" fill="#e8843e"/>
<rect x="672" y="121" width="3" height="2" fill="#e8843e"/>
<rect x="679" y="116" width="1" height="31" fill="#e8843e"/>
<rect x="678" y="119" width="3" height="27" fill="#e8843e"/>
<rect x="679" y="120" width="1" height="25" fill="#3b4149"/>
<rect x="685" y="142" width="1" height="18" fill="#e8843e"/>
<rect x="684" y="143" width="3" height="17" fill="#e8843e"/>
<rect x="685" y="144" width="1" height="15" fill="#3b4149"/>
<rect x="691" y="154" width="1" height="8" fill="#e8843e"/>
<rect x="690" y="158" width="3" height="4" fill="#e8843e"/>
<rect x="691" y="159" width="1" height="2" fill="#3b4149"/>
<rect x="697" y="154" width="1" height="16" fill="#e8843e"/>
<rect x="696" y="161" width="3" height="5" fill="#e8843e"/>
<rect x="697" y="162" width="1" height="3" fill="#3b4149"/>
<rect x="703" y="157" width="1" height="14" fill="#e8843e"/>
<rect x="702" y="164" width="3" height="2" fill="#e8843e"/>
<rect x="709" y="164" width="1" height="15" fill="#e8843e"/>
<rect x="708" y="165" width="3" height="13" fill="#e8843e"/>
<rect x="709" y="166" width="1" height="11" fill="#3b4149"/>
<rect x="715" y="149" width="1" height="29" fill="#e8843e"/>
<rect x="714" y="152" width="3" height="25" fill="#e8843e"/>
<rect x="715" y="153" width="1" height="23" fill="#f4a462"/>
<rect x="721" y="149" width="1" height="20" fill="#e8843e"/>
<rect x="720" y="151" width="3" height="5" fill="#e8843e"/>
<rect x="721" y="152" width="1" height="3" fill="#3b4149"/>
<rect x="727" y="151" width="1" height="23" fill="#e8843e"/>
<rect x="726" y="154" width="3" height="17" fill="#e8843e"/>
<rect x="727" y="155" width="1" height="15" fill="#3b4149"/>
<rect x="733" y="163" width="1" height="14" fill="#e8843e"/>
<rect x="732" y="167" width="3" height="2" fill="#e8843e"/>
<rect x="739" y="151" width="1" height="17" fill="#e8843e"/>
<rect x="738" y="157" width="3" height="9" fill="#e8843e"/>
<rect x="739" y="158" width="1" height="7" fill="#f4a462"/>
<rect x="745" y="141" width="1" height="20" fill="#e8843e"/>
<rect x="744" y="152" width="3" height="5" fill="#e8843e"/>
<rect x="745" y="153" width="1" height="3" fill="#f4a462"/>
<rect x="751" y="131" width="1" height="23" fill="#e8843e"/>
<rect x="750" y="134" width="3" height="17" fill="#e8843e"/>
<rect x="751" y="135" width="1" height="15" fill="#f4a462"/>
<rect x="757" y="130" width="1" height="21" fill="#e8843e"/>
<rect x="756" y="134" width="3" height="16" fill="#e8843e"/>
<rect x="757" y="135" width="1" height="14" fill="#3b4149"/>
<rect x="763" y="149" width="1" height="6" fill="#e8843e"/>
<rect x="762" y="150" width="3" height="6" fill="#e8843e"/>
<rect x="763" y="151" width="1" height="4" fill="#3b4149"/>
<rect x="769" y="159" width="1" height="9" fill="#e8843e"/>
<rect x="768" y="166" width="3" height="2" fill="#e8843e"/>
<rect x="775" y="158" width="1" height="10" fill="#e8843e"/>
<rect x="774" y="164" width="3" height="3" fill="#e8843e"/>
<rect x="775" y="165" width="1" height="1" fill="#f4a462"/>
<rect x="781" y="154" width="1" height="25" fill="#e8843e"/>
<rect x="780" y="163" width="3" height="16" fill="#e8843e"/>
<rect x="781" y="164" width="1" height="14" fill="#3b4149"/>
<rect x="787" y="168" width="1" height="30" fill="#e8843e"/>
<rect x="786" y="177" width="3" height="20" fill="#e8843e"/>
<rect x="787" y="178" width="1" height="18" fill="#3b4149"/>
<rect x="793" y="185" width="1" height="42" fill="#e8843e"/>
<rect x="792" y="196" width="3" height="7" fill="#e8843e"/>
<rect x="793" y="197" width="1" height="5" fill="#3b4149"/>
<rect x="799" y="191" width="1" height="11" fill="#e8843e"/>
<rect x="798" y="197" width="3" height="5" fill="#e8843e"/>
<rect x="799" y="198" width="1" height="3" fill="#f4a462"/>
<rect x="805" y="188" width="1" height="12" fill="#e8843e"/>
<rect x="804" y="194" width="3" height="2" fill="#e8843e"/>
<rect x="811" y="185" width="1" height="20" fill="#e8843e"/>
<rect x="810" y="194" width="3" height="4" fill="#e8843e"/>
<rect x="811" y="195" width="1" height="2" fill="#3b4149"/>
<rect x="817" y="174" width="1" height="23" fill="#e8843e"/>
<rect x="816" y="186" width="3" height="11" fill="#e8843e"/>
<rect x="817" y="187" width="1" height="9" fill="#f4a462"/>
<rect x="823" y="184" width="1" height="23" fill="#e8843e"/>
<rect x="822" y="185" width="3" height="9" fill="#e8843e"/>
<rect x="823" y="186" width="1" height="7" fill="#3b4149"/>
<rect x="829" y="159" width="1" height="46" fill="#e8843e"/>
<rect x="828" y="165" width="3" height="28" fill="#e8843e"/>
<rect x="829" y="166" width="1" height="26" fill="#f4a462"/>
<rect x="835" y="161" width="1" height="10" fill="#e8843e"/>
<rect x="834" y="164" width="3" height="6" fill="#e8843e"/>
<rect x="835" y="165" width="1" height="4" fill="#3b4149"/>
<rect x="841" y="157" width="1" height="13" fill="#e8843e"/>
<rect x="840" y="161" width="3" height="8" fill="#e8843e"/>
<rect x="841" y="162" width="1" height="6" fill="#f4a462"/>
<rect x="847" y="157" width="1" height="11" fill="#e8843e"/>
<rect x="846" y="160" width="3" height="7" fill="#e8843e"/>
<rect x="847" y="161" width="1" height="5" fill="#3b4149"/>
<rect x="853" y="143" width="1" height="28" fill="#e8843e"/>
<rect x="852" y="151" width="3" height="15" fill="#e8843e"/>
<rect x="853" y="152" width="1" height="13" fill="#f4a462"/>
<rect x="859" y="144" width="1" height="13" fill="#e8843e"/>
<rect x="858" y="148" width="3" height="3" fill="#e8843e"/>
<rect x="859" y="149" width="1" height="1" fill="#3b4149"/>
<polyline points="16.0,162.9 22.6,160.8 37.8,160.8 39.9,159.1 78.8,158.5 91.8,156.3 106.6,153.5 117.7,149.8 130.0,145.4 148.5,138.9 157.8,136.1 167.0,133.3 185.6,128.7 196.7,126.3 213.3,124.4 226.3,122.2 241.1,120.7 250.0,120.4 319.0,119.8 326.5,118.0 337.6,115.2 356.0,107.8 373.0,101.3 387.8,96.7 400.7,94.4 424.8,93.9 443.0,93.0 471.0,93.9 480.0,95.5 493.5,97.2 512.0,98.7 526.8,101.9 541.7,107.4 556.5,113.0 571.3,117.6 586.0,120.4 595.0,120.4 608.5,122.0 636.3,123.0 673.3,123.0 686.3,124.8 701.0,129.4 710.0,130.5 723.5,131.7 742.0,135.4 760.6,137.2 779.0,140.9 797.6,146.5 817.0,151.3 829.0,153.2 839.0,154.9 858.7,154.9" fill="none" stroke="#b02428" stroke-width="2" stroke-linejoin="round" shape-rendering="crispEdges"/>
<polyline points="16.0,141.5 48.0,142.0 56.0,145.5 62.0,146.5 75.0,146.5 84.0,145.0 97.0,141.0 110.0,134.0 121.0,129.4 130.0,125.0 139.3,120.4 148.5,115.2 155.9,112.0 167.0,108.9 178.0,106.5 189.3,104.6 196.7,103.3 213.3,103.7 231.9,104.0 250.0,103.5 263.5,106.0 282.0,106.9 300.5,109.6 310.0,111.5 319.0,111.5 328.0,105.9 341.0,101.3 356.0,90.0 365.0,85.0 373.0,79.0 384.0,73.5 399.0,72.6 421.0,73.5 434.0,78.1 452.6,82.8 471.0,88.3 482.4,92.6 499.0,97.2 517.6,100.9 523.0,104.6 536.0,116.7 552.8,128.7 567.6,135.2 578.7,136.1 595.0,139.3 612.0,139.0 627.0,137.8 645.5,134.0 664.0,128.5 673.3,128.0 686.3,132.2 701.0,139.6 710.0,143.5 719.8,145.6 732.8,148.3 745.7,149.3 760.6,148.3 779.0,153.9 790.2,160.4 801.3,166.9 817.0,173.0 823.9,174.4 837.4,172.7 851.0,170.2 858.7,167.3" fill="none" stroke="#1414a4" stroke-width="2" stroke-linejoin="round" shape-rendering="crispEdges"/>
</g>
<g clip-path="url(#clipMacd)">
<rect x="16" y="298" width="2" height="4" fill="#c42424"/>
<rect x="22" y="298" width="2" height="4" fill="#c42424"/>
<rect x="28" y="298" width="2" height="4" fill="#c42424"/>
<rect x="34" y="298" width="2" height="4" fill="#c42424"/>
<rect x="40" y="298" width="2" height="4" fill="#c42424"/>
<rect x="46" y="298" width="2" height="4" fill="#c42424"/>
<rect x="52" y="298" width="2" height="6" fill="#c42424"/>
<rect x="58" y="298" width="2" height="5" fill="#c42424"/>
<rect x="64" y="298" width="2" height="4" fill="#c42424"/>
<rect x="70" y="298" width="2" height="4" fill="#c42424"/>
<rect x="76" y="298" width="2" height="3" fill="#c42424"/>
<rect x="83" y="298" width="2" height="1" fill="#c42424"/>
<rect x="89" y="297" width="2" height="2" fill="#c42424"/>
<rect x="95" y="297" width="2" height="2" fill="#c42424"/>
<rect x="101" y="296" width="2" height="3" fill="#c42424"/>
<rect x="107" y="295" width="2" height="4" fill="#c42424"/>
<rect x="113" y="295" width="2" height="4" fill="#c42424"/>
<rect x="119" y="295" width="2" height="4" fill="#c42424"/>
<rect x="125" y="295" width="2" height="4" fill="#c42424"/>
<rect x="131" y="295" width="2" height="4" fill="#c42424"/>
<rect x="137" y="295" width="2" height="4" fill="#c42424"/>
<rect x="143" y="295" width="2" height="4" fill="#c42424"/>
<rect x="149" y="295" width="2" height="4" fill="#c42424"/>
<rect x="155" y="296" width="2" height="3" fill="#c42424"/>
<rect x="161" y="297" width="2" height="2" fill="#c42424"/>
<rect x="167" y="297" width="2" height="2" fill="#c42424"/>
<rect x="173" y="297" width="2" height="2" fill="#c42424"/>
<rect x="179" y="298" width="2" height="1" fill="#c42424"/>
<rect x="185" y="298" width="2" height="1" fill="#c42424"/>
<rect x="191" y="298" width="2" height="2" fill="#c42424"/>
<rect x="197" y="298" width="2" height="3" fill="#c42424"/>
<rect x="203" y="298" width="2" height="4" fill="#c42424"/>
<rect x="209" y="298" width="2" height="4" fill="#c42424"/>
<rect x="215" y="298" width="2" height="5" fill="#c42424"/>
<rect x="221" y="298" width="2" height="5" fill="#c42424"/>
<rect x="227" y="298" width="2" height="4" fill="#c42424"/>
<rect x="233" y="298" width="2" height="4" fill="#c42424"/>
<rect x="239" y="298" width="2" height="4" fill="#c42424"/>
<rect x="245" y="298" width="2" height="4" fill="#c42424"/>
<rect x="251" y="298" width="2" height="4" fill="#c42424"/>
<rect x="257" y="298" width="2" height="4" fill="#c42424"/>
<rect x="263" y="298" width="2" height="4" fill="#c42424"/>
<rect x="269" y="298" width="2" height="4" fill="#c42424"/>
<rect x="275" y="298" width="2" height="4" fill="#c42424"/>
<rect x="281" y="298" width="2" height="4" fill="#c42424"/>
<rect x="287" y="298" width="2" height="3" fill="#c42424"/>
<rect x="293" y="298" width="2" height="3" fill="#c42424"/>
<rect x="299" y="298" width="2" height="3" fill="#c42424"/>
<rect x="305" y="298" width="2" height="3" fill="#c42424"/>
<rect x="311" y="298" width="2" height="2" fill="#c42424"/>
<rect x="317" y="298" width="2" height="2" fill="#c42424"/>
<rect x="323" y="298" width="2" height="1" fill="#c42424"/>
<rect x="329" y="297" width="2" height="2" fill="#c42424"/>
<rect x="335" y="296" width="2" height="3" fill="#c42424"/>
<rect x="341" y="295" width="2" height="4" fill="#c42424"/>
<rect x="347" y="293" width="2" height="6" fill="#c42424"/>
<rect x="353" y="292" width="2" height="7" fill="#c42424"/>
<rect x="359" y="292" width="2" height="7" fill="#c42424"/>
<rect x="365" y="292" width="2" height="7" fill="#c42424"/>
<rect x="371" y="292" width="2" height="7" fill="#c42424"/>
<rect x="377" y="293" width="2" height="6" fill="#c42424"/>
<rect x="383" y="294" width="2" height="5" fill="#c42424"/>
<rect x="389" y="296" width="2" height="3" fill="#c42424"/>
<rect x="395" y="297" width="2" height="2" fill="#c42424"/>
<rect x="401" y="298" width="2" height="1" fill="#c42424"/>
<rect x="407" y="298" width="2" height="3" fill="#c42424"/>
<rect x="413" y="298" width="2" height="4" fill="#c42424"/>
<rect x="419" y="298" width="2" height="5" fill="#c42424"/>
<rect x="425" y="298" width="2" height="5" fill="#c42424"/>
<rect x="431" y="298" width="2" height="5" fill="#c42424"/>
<rect x="437" y="298" width="2" height="5" fill="#c42424"/>
<rect x="443" y="298" width="2" height="5" fill="#c42424"/>
<rect x="449" y="298" width="2" height="4" fill="#c42424"/>
<rect x="455" y="298" width="2" height="5" fill="#c42424"/>
<rect x="461" y="298" width="2" height="5" fill="#c42424"/>
<rect x="467" y="298" width="2" height="5" fill="#c42424"/>
<rect x="473" y="298" width="2" height="5" fill="#c42424"/>
<rect x="479" y="298" width="2" height="6" fill="#c42424"/>
<rect x="485" y="298" width="2" height="7" fill="#c42424"/>
<rect x="491" y="298" width="2" height="5" fill="#c42424"/>
<rect x="497" y="298" width="2" height="4" fill="#c42424"/>
<rect x="503" y="298" width="2" height="3" fill="#c42424"/>
<rect x="509" y="298" width="2" height="2" fill="#c42424"/>
<rect x="515" y="298" width="2" height="1" fill="#c42424"/>
<rect x="521" y="298" width="2" height="3" fill="#c42424"/>
<rect x="527" y="298" width="2" height="5" fill="#c42424"/>
<rect x="533" y="298" width="2" height="6" fill="#c42424"/>
<rect x="539" y="298" width="2" height="7" fill="#c42424"/>
<rect x="545" y="298" width="2" height="7" fill="#c42424"/>
<rect x="551" y="298" width="2" height="7" fill="#c42424"/>
<rect x="557" y="298" width="2" height="5" fill="#c42424"/>
<rect x="563" y="298" width="2" height="5" fill="#c42424"/>
<rect x="569" y="298" width="2" height="4" fill="#c42424"/>
<rect x="576" y="298" width="2" height="2" fill="#c42424"/>
<rect x="582" y="298" width="2" height="1" fill="#c42424"/>
<rect x="588" y="298" width="2" height="1" fill="#c42424"/>
<rect x="594" y="297" width="2" height="2" fill="#c42424"/>
<rect x="600" y="297" width="2" height="2" fill="#c42424"/>
<rect x="606" y="295" width="2" height="4" fill="#c42424"/>
<rect x="612" y="294" width="2" height="5" fill="#c42424"/>
<rect x="618" y="294" width="2" height="5" fill="#c42424"/>
<rect x="624" y="293" width="2" height="6" fill="#c42424"/>
<rect x="630" y="293" width="2" height="6" fill="#c42424"/>
<rect x="636" y="293" width="2" height="6" fill="#c42424"/>
<rect x="642" y="293" width="2" height="6" fill="#c42424"/>
<rect x="648" y="294" width="2" height="5" fill="#c42424"/>
<rect x="654" y="294" width="2" height="5" fill="#c42424"/>
<rect x="660" y="294" width="2" height="5" fill="#c42424"/>
<rect x="666" y="294" width="2" height="5" fill="#c42424"/>
<rect x="672" y="295" width="2" height="4" fill="#c42424"/>
<rect x="678" y="297" width="2" height="2" fill="#c42424"/>
<rect x="684" y="298" width="2" height="1" fill="#c42424"/>
<rect x="690" y="298" width="2" height="2" fill="#c42424"/>
<rect x="696" y="298" width="2" height="4" fill="#c42424"/>
<rect x="702" y="298" width="2" height="5" fill="#c42424"/>
<rect x="708" y="298" width="2" height="6" fill="#c42424"/>
<rect x="714" y="298" width="2" height="5" fill="#c42424"/>
<rect x="720" y="298" width="2" height="4" fill="#c42424"/>
<rect x="726" y="298" width="2" height="3" fill="#c42424"/>
<rect x="732" y="298" width="2" height="3" fill="#c42424"/>
<rect x="738" y="298" width="2" height="2" fill="#c42424"/>
<rect x="744" y="298" width="2" height="1" fill="#c42424"/>
<rect x="750" y="298" width="2" height="1" fill="#c42424"/>
<rect x="756" y="298" width="2" height="1" fill="#c42424"/>
<rect x="762" y="298" width="2" height="1" fill="#c42424"/>
<rect x="768" y="298" width="2" height="1" fill="#c42424"/>
<rect x="774" y="298" width="2" height="1" fill="#c42424"/>
<rect x="780" y="298" width="2" height="2" fill="#c42424"/>
<rect x="786" y="298" width="2" height="4" fill="#c42424"/>
<rect x="792" y="298" width="2" height="5" fill="#c42424"/>
<rect x="798" y="298" width="2" height="5" fill="#c42424"/>
<rect x="804" y="298" width="2" height="5" fill="#c42424"/>
<rect x="810" y="298" width="2" height="4" fill="#c42424"/>
<rect x="816" y="298" width="2" height="3" fill="#c42424"/>
<rect x="822" y="298" width="2" height="2" fill="#c42424"/>
<rect x="828" y="298" width="2" height="1" fill="#c42424"/>
<rect x="834" y="297" width="2" height="2" fill="#c42424"/>
<rect x="840" y="297" width="2" height="2" fill="#c42424"/>
<rect x="846" y="296" width="2" height="3" fill="#c42424"/>
<rect x="852" y="295" width="2" height="4" fill="#c42424"/>
<rect x="858" y="293" width="2" height="6" fill="#c42424"/>
<polyline points="37.0,291.8 47.5,292.4 55.8,296.6 72.5,297.0 85.0,295.3 105.8,289.7 130.8,284.9 147.5,282.4 166.0,282.0 187.0,284.0 208.0,289.7 218.0,291.8 240.0,294.1 266.0,298.0 292.0,300.1 318.0,300.6 331.0,296.7 344.0,291.5 360.0,283.7 375.4,279.3 385.8,279.3 401.5,285.0 422.0,291.5 448.0,296.7 474.0,303.2 487.0,307.2 500.0,306.4 516.0,306.4 528.0,311.5 543.0,318.4 553.4,321.0 569.0,318.9 595.0,313.7 621.0,305.3 647.0,299.3 665.4,295.4 675.8,296.0 691.5,302.0 709.7,308.0 725.3,308.0 738.3,307.2 764.4,303.8 777.4,305.3 792.0,311.0 805.0,313.1 822.0,313.1 834.7,308.7 850.3,304.0 859.7,300.1" fill="none" stroke="#10185e" stroke-width="1.6" stroke-linejoin="round" shape-rendering="geometricPrecision"/>
<circle cx="47.7" cy="288.2" r="1.6" fill="#e42a2a" shape-rendering="geometricPrecision"/>
<circle cx="53.7" cy="289.9" r="1.6" fill="#e42a2a" shape-rendering="geometricPrecision"/>
<circle cx="59.7" cy="291.7" r="1.6" fill="#e42a2a" shape-rendering="geometricPrecision"/>
<circle cx="65.7" cy="292.5" r="1.6" fill="#e42a2a" shape-rendering="geometricPrecision"/>
<circle cx="71.7" cy="293.2" r="1.6" fill="#e42a2a" shape-rendering="geometricPrecision"/>
<circle cx="77.7" cy="293.8" r="1.6" fill="#e42a2a" shape-rendering="geometricPrecision"/>
<circle cx="84.7" cy="294.5" r="1.6" fill="#e42a2a" shape-rendering="geometricPrecision"/>
<circle cx="90.7" cy="294.0" r="1.6" fill="#e42a2a" shape-rendering="geometricPrecision"/>
<circle cx="96.7" cy="293.4" r="1.6" fill="#e42a2a" shape-rendering="geometricPrecision"/>
<circle cx="102.7" cy="292.9" r="1.6" fill="#e42a2a" shape-rendering="geometricPrecision"/>
<circle cx="108.7" cy="292.0" r="1.6" fill="#e42a2a" shape-rendering="geometricPrecision"/>
<circle cx="114.7" cy="291.0" r="1.6" fill="#e42a2a" shape-rendering="geometricPrecision"/>
<circle cx="120.7" cy="290.0" r="1.6" fill="#e42a2a" shape-rendering="geometricPrecision"/>
<circle cx="126.7" cy="289.0" r="1.6" fill="#e42a2a" shape-rendering="geometricPrecision"/>
<circle cx="132.7" cy="288.0" r="1.6" fill="#e42a2a" shape-rendering="geometricPrecision"/>
<circle cx="138.7" cy="287.0" r="1.6" fill="#e42a2a" shape-rendering="geometricPrecision"/>
<circle cx="144.7" cy="286.0" r="1.6" fill="#e42a2a" shape-rendering="geometricPrecision"/>
<circle cx="150.7" cy="285.1" r="1.6" fill="#e42a2a" shape-rendering="geometricPrecision"/>
<circle cx="156.7" cy="284.3" r="1.6" fill="#e42a2a" shape-rendering="geometricPrecision"/>
<circle cx="162.7" cy="283.5" r="1.6" fill="#e42a2a" shape-rendering="geometricPrecision"/>
<circle cx="168.7" cy="282.8" r="1.6" fill="#e42a2a" shape-rendering="geometricPrecision"/>
<circle cx="174.7" cy="283.0" r="1.6" fill="#e42a2a" shape-rendering="geometricPrecision"/>
<circle cx="180.7" cy="283.2" r="1.6" fill="#e42a2a" shape-rendering="geometricPrecision"/>
<circle cx="186.7" cy="283.3" r="1.6" fill="#e42a2a" shape-rendering="geometricPrecision"/>
<circle cx="192.7" cy="283.5" r="1.6" fill="#e42a2a" shape-rendering="geometricPrecision"/>
<circle cx="198.7" cy="284.3" r="1.6" fill="#e42a2a" shape-rendering="geometricPrecision"/>
<circle cx="204.7" cy="285.1" r="1.6" fill="#e42a2a" shape-rendering="geometricPrecision"/>
<circle cx="210.7" cy="286.0" r="1.6" fill="#e42a2a" shape-rendering="geometricPrecision"/>
<circle cx="216.7" cy="286.8" r="1.6" fill="#e42a2a" shape-rendering="geometricPrecision"/>
<circle cx="222.7" cy="287.7" r="1.6" fill="#e42a2a" shape-rendering="geometricPrecision"/>
<circle cx="228.7" cy="288.6" r="1.6" fill="#e42a2a" shape-rendering="geometricPrecision"/>
<circle cx="234.7" cy="289.4" r="1.6" fill="#e42a2a" shape-rendering="geometricPrecision"/>
<circle cx="240.7" cy="290.3" r="1.6" fill="#e42a2a" shape-rendering="geometricPrecision"/>
<circle cx="246.7" cy="291.2" r="1.6" fill="#e42a2a" shape-rendering="geometricPrecision"/>
<circle cx="252.7" cy="292.1" r="1.6" fill="#e42a2a" shape-rendering="geometricPrecision"/>
<circle cx="258.7" cy="293.0" r="1.6" fill="#e42a2a" shape-rendering="geometricPrecision"/>
<circle cx="264.7" cy="293.9" r="1.6" fill="#e42a2a" shape-rendering="geometricPrecision"/>
<circle cx="270.7" cy="294.6" r="1.6" fill="#e42a2a" shape-rendering="geometricPrecision"/>
<circle cx="276.7" cy="295.2" r="1.6" fill="#e42a2a" shape-rendering="geometricPrecision"/>
<circle cx="282.7" cy="295.8" r="1.6" fill="#e42a2a" shape-rendering="geometricPrecision"/>
<circle cx="288.7" cy="296.4" r="1.6" fill="#e42a2a" shape-rendering="geometricPrecision"/>
<circle cx="294.7" cy="296.9" r="1.6" fill="#e42a2a" shape-rendering="geometricPrecision"/>
<circle cx="300.7" cy="297.3" r="1.6" fill="#e42a2a" shape-rendering="geometricPrecision"/>
<circle cx="306.7" cy="297.8" r="1.6" fill="#e42a2a" shape-rendering="geometricPrecision"/>
<circle cx="312.7" cy="298.2" r="1.6" fill="#e42a2a" shape-rendering="geometricPrecision"/>
<circle cx="318.7" cy="298.5" r="1.6" fill="#e42a2a" shape-rendering="geometricPrecision"/>
<circle cx="324.7" cy="297.8" r="1.6" fill="#e42a2a" shape-rendering="geometricPrecision"/>
<circle cx="330.7" cy="297.0" r="1.6" fill="#e42a2a" shape-rendering="geometricPrecision"/>
<circle cx="336.7" cy="296.3" r="1.6" fill="#e42a2a" shape-rendering="geometricPrecision"/>
<circle cx="342.7" cy="295.6" r="1.6" fill="#e42a2a" shape-rendering="geometricPrecision"/>
<circle cx="348.7" cy="293.9" r="1.6" fill="#e42a2a" shape-rendering="geometricPrecision"/>
<circle cx="354.7" cy="291.9" r="1.6" fill="#e42a2a" shape-rendering="geometricPrecision"/>
<circle cx="360.7" cy="290.0" r="1.6" fill="#e42a2a" shape-rendering="geometricPrecision"/>
<circle cx="366.7" cy="287.9" r="1.6" fill="#e42a2a" shape-rendering="geometricPrecision"/>
<circle cx="372.7" cy="285.9" r="1.6" fill="#e42a2a" shape-rendering="geometricPrecision"/>
<circle cx="378.7" cy="284.4" r="1.6" fill="#e42a2a" shape-rendering="geometricPrecision"/>
<circle cx="384.7" cy="283.2" r="1.6" fill="#e42a2a" shape-rendering="geometricPrecision"/>
<circle cx="390.7" cy="283.2" r="1.6" fill="#e42a2a" shape-rendering="geometricPrecision"/>
<circle cx="396.7" cy="283.5" r="1.6" fill="#e42a2a" shape-rendering="geometricPrecision"/>
<circle cx="402.7" cy="283.9" r="1.6" fill="#e42a2a" shape-rendering="geometricPrecision"/>
<circle cx="408.7" cy="284.6" r="1.6" fill="#e42a2a" shape-rendering="geometricPrecision"/>
<circle cx="414.7" cy="285.4" r="1.6" fill="#e42a2a" shape-rendering="geometricPrecision"/>
<circle cx="420.7" cy="286.1" r="1.6" fill="#e42a2a" shape-rendering="geometricPrecision"/>
<circle cx="426.7" cy="287.4" r="1.6" fill="#e42a2a" shape-rendering="geometricPrecision"/>
<circle cx="432.7" cy="288.8" r="1.6" fill="#e42a2a" shape-rendering="geometricPrecision"/>
<circle cx="438.7" cy="290.2" r="1.6" fill="#e42a2a" shape-rendering="geometricPrecision"/>
<circle cx="444.7" cy="291.5" r="1.6" fill="#e42a2a" shape-rendering="geometricPrecision"/>
<circle cx="450.7" cy="292.9" r="1.6" fill="#e42a2a" shape-rendering="geometricPrecision"/>
<circle cx="456.7" cy="294.2" r="1.6" fill="#e42a2a" shape-rendering="geometricPrecision"/>
<circle cx="462.7" cy="295.5" r="1.6" fill="#e42a2a" shape-rendering="geometricPrecision"/>
<circle cx="468.7" cy="296.8" r="1.6" fill="#e42a2a" shape-rendering="geometricPrecision"/>
<circle cx="474.7" cy="298.1" r="1.6" fill="#e42a2a" shape-rendering="geometricPrecision"/>
<circle cx="480.7" cy="299.4" r="1.6" fill="#e42a2a" shape-rendering="geometricPrecision"/>
<circle cx="486.7" cy="300.6" r="1.6" fill="#e42a2a" shape-rendering="geometricPrecision"/>
<circle cx="492.7" cy="301.8" r="1.6" fill="#e42a2a" shape-rendering="geometricPrecision"/>
<circle cx="498.7" cy="303.0" r="1.6" fill="#e42a2a" shape-rendering="geometricPrecision"/>
<circle cx="504.7" cy="303.9" r="1.6" fill="#e42a2a" shape-rendering="geometricPrecision"/>
<circle cx="510.7" cy="304.7" r="1.6" fill="#e42a2a" shape-rendering="geometricPrecision"/>
<circle cx="516.7" cy="305.4" r="1.6" fill="#e42a2a" shape-rendering="geometricPrecision"/>
<circle cx="522.7" cy="306.2" r="1.6" fill="#e42a2a" shape-rendering="geometricPrecision"/>
<circle cx="528.7" cy="307.0" r="1.6" fill="#e42a2a" shape-rendering="geometricPrecision"/>
<circle cx="534.7" cy="308.6" r="1.6" fill="#e42a2a" shape-rendering="geometricPrecision"/>
<circle cx="540.7" cy="310.4" r="1.6" fill="#e42a2a" shape-rendering="geometricPrecision"/>
<circle cx="546.7" cy="312.2" r="1.6" fill="#e42a2a" shape-rendering="geometricPrecision"/>
<circle cx="552.7" cy="314.0" r="1.6" fill="#e42a2a" shape-rendering="geometricPrecision"/>
<circle cx="558.7" cy="315.0" r="1.6" fill="#e42a2a" shape-rendering="geometricPrecision"/>
<circle cx="564.7" cy="315.0" r="1.6" fill="#e42a2a" shape-rendering="geometricPrecision"/>
<circle cx="570.7" cy="315.0" r="1.6" fill="#e42a2a" shape-rendering="geometricPrecision"/>
<circle cx="577.7" cy="315.0" r="1.6" fill="#e42a2a" shape-rendering="geometricPrecision"/>
<circle cx="583.7" cy="314.8" r="1.6" fill="#e42a2a" shape-rendering="geometricPrecision"/>
<circle cx="589.7" cy="314.2" r="1.6" fill="#e42a2a" shape-rendering="geometricPrecision"/>
<circle cx="595.7" cy="313.6" r="1.6" fill="#e42a2a" shape-rendering="geometricPrecision"/>
<circle cx="601.7" cy="313.0" r="1.6" fill="#e42a2a" shape-rendering="geometricPrecision"/>
<circle cx="607.7" cy="312.4" r="1.6" fill="#e42a2a" shape-rendering="geometricPrecision"/>
<circle cx="613.7" cy="311.3" r="1.6" fill="#e42a2a" shape-rendering="geometricPrecision"/>
<circle cx="619.7" cy="310.1" r="1.6" fill="#e42a2a" shape-rendering="geometricPrecision"/>
<circle cx="625.7" cy="308.9" r="1.6" fill="#e42a2a" shape-rendering="geometricPrecision"/>
<circle cx="631.7" cy="307.7" r="1.6" fill="#e42a2a" shape-rendering="geometricPrecision"/>
<circle cx="637.7" cy="306.3" r="1.6" fill="#e42a2a" shape-rendering="geometricPrecision"/>
<circle cx="643.7" cy="304.7" r="1.6" fill="#e42a2a" shape-rendering="geometricPrecision"/>
<circle cx="649.7" cy="303.2" r="1.6" fill="#e42a2a" shape-rendering="geometricPrecision"/>
<circle cx="655.7" cy="301.7" r="1.6" fill="#e42a2a" shape-rendering="geometricPrecision"/>
<circle cx="661.7" cy="300.3" r="1.6" fill="#e42a2a" shape-rendering="geometricPrecision"/>
<circle cx="667.7" cy="299.3" r="1.6" fill="#e42a2a" shape-rendering="geometricPrecision"/>
<circle cx="673.7" cy="298.3" r="1.6" fill="#e42a2a" shape-rendering="geometricPrecision"/>
<circle cx="679.7" cy="298.4" r="1.6" fill="#e42a2a" shape-rendering="geometricPrecision"/>
<circle cx="685.7" cy="299.1" r="1.6" fill="#e42a2a" shape-rendering="geometricPrecision"/>
<circle cx="691.7" cy="299.8" r="1.6" fill="#e42a2a" shape-rendering="geometricPrecision"/>
<circle cx="697.7" cy="300.5" r="1.6" fill="#e42a2a" shape-rendering="geometricPrecision"/>
<circle cx="703.7" cy="301.3" r="1.6" fill="#e42a2a" shape-rendering="geometricPrecision"/>
<circle cx="709.7" cy="302.2" r="1.6" fill="#e42a2a" shape-rendering="geometricPrecision"/>
<circle cx="715.7" cy="303.1" r="1.6" fill="#e42a2a" shape-rendering="geometricPrecision"/>
<circle cx="721.7" cy="304.1" r="1.6" fill="#e42a2a" shape-rendering="geometricPrecision"/>
<circle cx="727.7" cy="304.7" r="1.6" fill="#e42a2a" shape-rendering="geometricPrecision"/>
<circle cx="733.7" cy="304.8" r="1.6" fill="#e42a2a" shape-rendering="geometricPrecision"/>
<circle cx="739.7" cy="305.0" r="1.6" fill="#e42a2a" shape-rendering="geometricPrecision"/>
<circle cx="745.7" cy="305.1" r="1.6" fill="#e42a2a" shape-rendering="geometricPrecision"/>
<circle cx="751.7" cy="305.3" r="1.6" fill="#e42a2a" shape-rendering="geometricPrecision"/>
<circle cx="757.7" cy="304.6" r="1.6" fill="#e42a2a" shape-rendering="geometricPrecision"/>
<circle cx="763.7" cy="303.9" r="1.6" fill="#e42a2a" shape-rendering="geometricPrecision"/>
<circle cx="769.7" cy="304.0" r="1.6" fill="#e42a2a" shape-rendering="geometricPrecision"/>
<circle cx="775.7" cy="304.3" r="1.6" fill="#e42a2a" shape-rendering="geometricPrecision"/>
<circle cx="781.7" cy="304.5" r="1.6" fill="#e42a2a" shape-rendering="geometricPrecision"/>
<circle cx="787.7" cy="305.4" r="1.6" fill="#e42a2a" shape-rendering="geometricPrecision"/>
<circle cx="793.7" cy="306.4" r="1.6" fill="#e42a2a" shape-rendering="geometricPrecision"/>
<circle cx="799.7" cy="307.3" r="1.6" fill="#e42a2a" shape-rendering="geometricPrecision"/>
<circle cx="805.7" cy="308.3" r="1.6" fill="#e42a2a" shape-rendering="geometricPrecision"/>
<circle cx="811.7" cy="309.3" r="1.6" fill="#e42a2a" shape-rendering="geometricPrecision"/>
<circle cx="817.7" cy="309.8" r="1.6" fill="#e42a2a" shape-rendering="geometricPrecision"/>
<circle cx="823.7" cy="310.3" r="1.6" fill="#e42a2a" shape-rendering="geometricPrecision"/>
<circle cx="829.7" cy="309.5" r="1.6" fill="#e42a2a" shape-rendering="geometricPrecision"/>
<circle cx="835.7" cy="308.8" r="1.6" fill="#e42a2a" shape-rendering="geometricPrecision"/>
<circle cx="841.7" cy="307.8" r="1.6" fill="#e42a2a" shape-rendering="geometricPrecision"/>
<circle cx="847.7" cy="306.9" r="1.6" fill="#e42a2a" shape-rendering="geometricPrecision"/>
<circle cx="853.7" cy="306.1" r="1.6" fill="#e42a2a" shape-rendering="geometricPrecision"/>
<circle cx="859.7" cy="305.3" r="1.6" fill="#e42a2a" shape-rendering="geometricPrecision"/>
</g>
<g clip-path="url(#clipRsi)">
<rect x="17" y="336" width="842" height="2" fill="#1c1ca2"/>
<rect x="17" y="388" width="842" height="2" fill="#1c1ca2"/>
<polyline points="16.7,358.3 23.5,363.5 29.8,358.3 35.0,360.4 41.2,364.2 47.5,359.4 53.8,375.4 65.2,362.9 70.4,361.5 78.8,356.2 84.0,358.3 91.2,352.1 95.4,351.0 104.8,344.8 110.0,344.8 114.0,346.2 120.4,343.8 131.9,339.6 138.0,343.3 143.3,340.6 151.7,340.6 156.9,338.5 162.0,340.6 174.6,355.8 180.8,349.6 186.0,350.4 192.3,347.9 198.5,351.0 210.0,369.2 216.2,357.3 224.6,360.8 234.0,364.6 240.2,361.5 246.5,355.8 252.5,368.3 257.7,365.6 265.0,369.2 270.2,366.7 276.5,365.0 282.7,362.1 289.0,369.2 295.2,367.7 301.5,367.7 306.7,369.2 312.5,371.2 318.0,362.1 324.4,345.4 327.5,344.2 335.8,345.4 342.0,345.4" fill="none" stroke="#f08c30" stroke-width="1" stroke-linejoin="round" shape-rendering="geometricPrecision"/>
<polyline points="342.0,345.4 348.3,337.1 352.5,336.5 360.8,332.3 366.0,335.0 372.3,332.3 378.5,337.1" fill="none" stroke="#c03cc8" stroke-width="1" stroke-linejoin="round" shape-rendering="geometricPrecision"/>
<polyline points="378.5,337.1 383.8,343.8 390.0,354.2 396.2,356.2 402.5,367.7 407.7,360.4 414.0,360.4 420.2,369.2 431.7,369.2 438.0,365.6 445.2,370.4 454.6,371.9 465.0,378.1 473.3,380.2 480.4,386.5 486.7,378.8 491.9,368.3 498.1,374.6 504.4,369.2 511.7,373.3 516.9,374.6 522.4,375.2" fill="none" stroke="#f08c30" stroke-width="1" stroke-linejoin="round" shape-rendering="geometricPrecision"/>
<polyline points="522.4,375.2 527.0,387.4 527.8,391.3 530.9,394.4 534.3,396.7 540.1,389.3 543.2,389.3 545.9,390.9 547.8,389.3 550.2,387.4" fill="none" stroke="#28d028" stroke-width="1" stroke-linejoin="round" shape-rendering="geometricPrecision"/>
<polyline points="550.2,387.4 557.5,379.6 564.8,375.0 571.0,378.1 577.3,369.2 583.5,372.5 588.8,371.2 595.0,368.3 601.2,371.2 607.5,366.2 613.8,360.8 624.2,360.8 631.5,358.3 636.7,361.5 643.0,354.6 649.2,359.4 655.4,351.7 660.6,351.7 666.9,357.3 673.1,357.3 678.3,369.8 684.6,378.1 692.9,379.6 703.3,380.8 709.4,385.4 715.6,368.3 720.8,369.2 727.0,376.0 732.3,374.6 740.6,366.7 745.8,364.6 751.0,356.7 757.3,364.2 762.5,366.7 769.8,373.3 774.0,370.4 780.2,376.0 787.5,382.9 792.7,385.4 800.0,380.8 805.2,380.2 811.5,380.8 817.7,373.3 824.0,376.0 829.2,361.5 835.0,363.5 841.7,358.3 846.9,362.5 853.1,354.6 858.3,353.1" fill="none" stroke="#f08c30" stroke-width="1" stroke-linejoin="round" shape-rendering="geometricPrecision"/>
</g>
<rect x="336" y="376" width="1" height="27" fill="#c8e8e0"/>
<rect x="16" y="376" width="1" height="27" fill="#c8e4e4"/>
</svg>
<div class="abs lbl" style="left:908.5px;top:43px">111.50</div>
<div class="abs lbl" style="left:908.5px;top:80px">111.00</div>
<div class="abs lbl" style="left:908.5px;top:117px">110.50</div>
<div class="abs lbl" style="left:908.5px;top:154px">110.00</div>
<div class="abs lbl" style="left:908.5px;top:191px">109.50</div>
<div class="abs lbl" style="left:908.5px;top:227px">109.00</div>
<div class="abs" style="left:901px;top:138px;width:48px;height:21px;background:#fff;"></div>
<div class="abs lbl" style="left:909.5px;top:141.5px;color:#383850">110.12</div>
<div class="abs lbl" style="left:910px;top:295px;font-size:10.6px">+0.0</div>
<div class="abs lbl" style="left:909px;top:359px;font-size:10.6px">50</div>
<div class="abs date" style="left:35.3px">21/Пн</div>
<div class="abs date" style="left:72.3px">22/Вт</div>
<div class="abs date" style="left:108.3px">23/Ср</div>
<div class="abs date" style="left:144.3px">24/Чт</div>
<div class="abs date" style="left:180.3px">25/Пт</div>
<div class="abs date" style="left:216.3px">28/Пн</div>
<div class="abs date" style="left:252.3px">29/Вт</div>
<div class="abs date" style="left:288.3px">30/Ср</div>
<div class="abs date" style="left:330.4px">1/Чт</div>
<div class="abs date" style="left:366.4px">2/Пт</div>
<div class="abs date" style="left:402.4px">5/Пн</div>
<div class="abs date" style="left:438.4px">6/Вт</div>
<div class="abs date" style="left:474.4px">7/Ср</div>
<div class="abs date" style="left:510.4px">8/Чт</div>
<div class="abs date" style="left:546.4px">9/Пт</div>
<div class="abs date" style="left:577.3px">12/Пн</div>
<div class="abs date" style="left:613.3px">13/Вт</div>
<div class="abs date" style="left:649.3px">14/Ср</div>
<div class="abs date" style="left:685.3px">15/Чт</div>
<div class="abs date" style="left:721.3px">16/Пт</div>
<div class="abs date" style="left:757.3px">19/Пн</div>
<div class="abs date" style="left:793.3px">20/Вт</div>
<div class="abs date" style="left:829.3px">21/Ср</div>
<div class="abs date" style="left:865.3px">22/Чт</div>
<div class="abs month" style="left:17px;top:376px;width:69px;"><span style="position:absolute;left:7px;top:3px">Июнь 2021</span></div>
<div class="abs month" style="left:337px;top:376px;width:68px;"><span style="position:absolute;left:7px;top:3px">Июль 2021</span></div>
<div class="abs leg" style="left:18px;color:#1c1cc8">Exponential_Moving_Average</div>
<div class="abs leg" style="left:156px;color:#d02828">Exponential_Moving_Average</div>
<div class="abs" style="left:16px;top:37px;width:31px;height:22px;background:#ececec;"><div style="height:5px;background:#c8c8c8"></div></div>
<div class="abs" style="left:20px;top:45px;width:8px;height:8px;border:1px solid #a01818;border-radius:2px;background:linear-gradient(#f05050,#c82020)"></div>
<div class="abs" style="left:33px;top:45px;width:8px;height:8px;border:1px solid #1a6090;border-radius:2px;background:linear-gradient(#40a8e0,#1a78c0)"></div>
<div class="abs" style="left:18px;top:280px;font-size:10px;color:#142070;background:#3b4149;padding-right:1px;line-height:12px">MACD</div>
<div class="abs" style="left:18px;top:331.5px;font-size:9.4px;color:#e8843e;background:#3b4149;padding-right:1px">RSI</div>
</body></html>
